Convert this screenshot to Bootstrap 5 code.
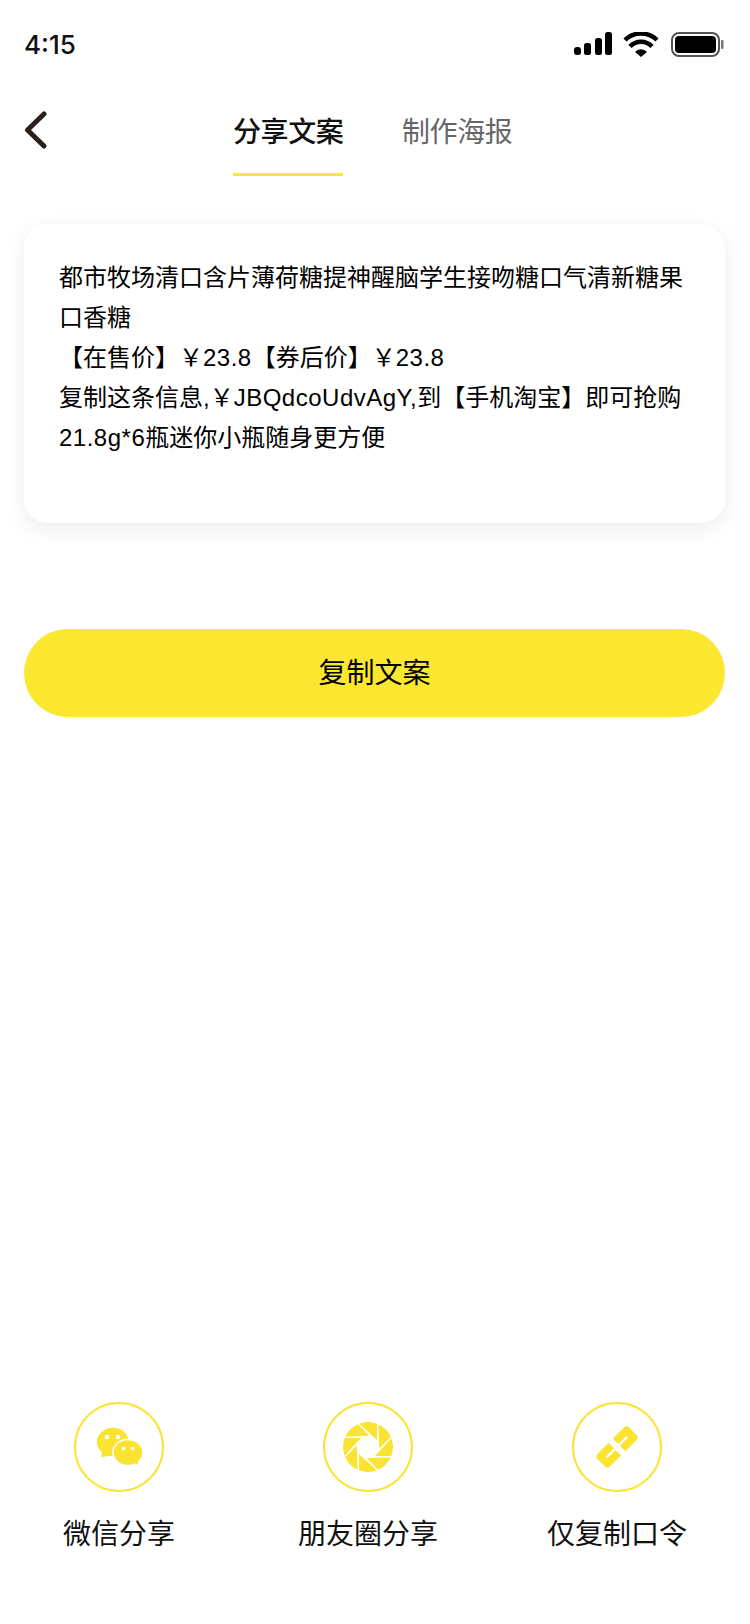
<!DOCTYPE html>
<html lang="zh-CN">

<head>
    <meta charset="utf-8">
    <title>分享文案</title>
    <link rel="stylesheet" href="https://cdn.jsdelivr.net/npm/bootstrap@5.3.0/dist/css/bootstrap.min.css">
    <style>
        body {
            background-color: #fff;
            color: #000;
            font-family: "Liberation Sans", "Noto Sans CJK SC", sans-serif;
        }

        .page-wrap {
            height: 1624px;
        }

        .status-bar {
            height: 88px;
            padding: 28px 26px 0 24px;
        }

        .status-icons {
            margin-top: 4px;
        }

        .status-time {
            font-family: Inter, sans-serif;
            font-size: 26px;
            font-weight: 500;
            line-height: 34px;
            color: #111;
        }

        .top-nav {
            padding: 23px 24px 0;
        }

        .tab-list {
            margin-left: 186px;
            gap: 59px;
        }

        .tab-item {
            font-size: 28px;
            line-height: 40px;
            padding-top: 2px;
            padding-bottom: 20px;
            color: #666;
            border-bottom: 3px solid transparent;
            width: 110px;
            white-space: nowrap;
            letter-spacing: -0.4px;
        }

        .tab-item.active-tab {
            color: #111;
            font-weight: 500;
            border-bottom-color: #fbe72f;
        }

        .copy-card {
            margin: 48px 25px 0 24px;
            height: 299px;
            border: none;
            border-radius: 24px;
            box-shadow: 0 6px 22px rgba(0, 0, 0, 0.08);
            padding: 34px 34px 0 35px;
            font-size: 24px;
            line-height: 40.1px;
        }

        .latin-run {
            letter-spacing: 0.5px;
        }

        .copy-btn {
            display: block;
            margin: 106px 25px 0 24px;
            height: 88px;
            width: 701px;
            border: none;
            border-radius: 44px;
            background-color: #fbe72f;
            color: #000;
            font-size: 28px;
            line-height: 82px;
            padding: 4px 0 2px;
        }

        .share-row {
            padding-right: 14px;
            padding-bottom: 69px;
        }

        .share-item {
            width: 238px;
            gap: 23px;
        }

        .share-label {
            font-size: 28px;
            line-height: 40px;
            color: #111;
        }
    </style>
</head>

<body>

    <div class="page-wrap d-flex flex-column">

        <!-- Status bar -->
        <div class="status-bar d-flex justify-content-between align-items-start">
            <span class="status-time">4:15</span>
            <svg class="status-icons" width="150" height="26" viewBox="0 0 150 26" fill="#000">
                <rect x="0" y="15" width="7" height="8" rx="3"/>
                <rect x="10" y="11" width="7" height="12" rx="2.5"/>
                <rect x="21" y="6" width="7" height="17" rx="2.5"/>
                <rect x="31" y="0" width="7" height="23" rx="2.5"/>
                <path d="M51 8 A23 23 0 0 1 83 8" fill="none" stroke="#000" stroke-width="4.5"/>
                <path d="M56 14.5 A15 15 0 0 1 78 14.5" fill="none" stroke="#000" stroke-width="4.5"/>
                <path d="M61 20 L67 25 L73 20 A8 8 0 0 0 61 20 Z"/>
                <rect x="98" y="1" width="47" height="23" rx="7" fill="none" stroke="#555" stroke-width="2"/>
                <rect x="101" y="4" width="41" height="17" rx="4"/>
                <rect x="147" y="8" width="2.5" height="9" rx="1" fill="#777"/>
            </svg>
        </div>

        <!-- Tabs -->
        <div class="top-nav d-flex align-items-start">
            <svg width="23" height="38" viewBox="0 0 23 38">
                <path d="M20 3 L3.500 19 L20 35" fill="none" stroke="#2a1f1c" stroke-width="5" stroke-linecap="round" stroke-linejoin="round"/>
            </svg>
            <div class="tab-list d-flex">
                <div class="tab-item active-tab">分享文案</div>
                <div class="tab-item">制作海报</div>
            </div>
        </div>

        <!-- Copy text -->
        <div class="card copy-card">
            <div>都市牧场清口含片薄荷糖提神醒脑学生接吻糖口气清新糖果口香糖<br>【在售价】￥<span class="latin-run">23.8</span>【券后价】￥<span class="latin-run">23.8</span><br>复制这条信息,￥<span class="latin-run">JBQdcoUdvAgY,</span>到【手机淘宝】即可抢购<br><span class="latin-run">21.8g*6</span>瓶迷你小瓶随身更方便</div>
        </div>

        <button type="button" class="btn copy-btn">复制文案</button>

        <!-- Share options -->
        <div class="share-row d-flex justify-content-between mt-auto">
            <div class="share-item d-flex flex-column align-items-center">
                <svg width="90" height="90" viewBox="0 0 90 90">
                    <circle cx="45" cy="45" r="44" fill="none" stroke="#fbe331" stroke-width="2"/>
                    <path d="M27 55 L28 50 A16 14 0 1 1 38 53.700 Z" fill="#fbe331"/>
                    <ellipse cx="54" cy="50.500" rx="15" ry="13" fill="#fbe331" stroke="#fff" stroke-width="1.500"/>
                    <path d="M59 60 L64 63 L64 56 Z" fill="#fbe331"/>
                    <circle cx="33" cy="35" r="2.300" fill="#fff"/>
                    <circle cx="44" cy="35" r="2.300" fill="#fff"/>
                    <circle cx="49.500" cy="46.500" r="1.800" fill="#fff"/>
                    <circle cx="58.500" cy="46.500" r="1.800" fill="#fff"/>
                </svg>
                <span class="share-label">微信分享</span>
            </div>
            <div class="share-item d-flex flex-column align-items-center">
                <svg width="90" height="90" viewBox="0 0 90 90">
                    <defs>
                        <clipPath id="lensClip"><circle cx="0" cy="0" r="25"/></clipPath>
                        <polygon id="lensBlade" points="-9.500,-24 -9.500,-27 9,-27 9,-7" fill="#fbe331"/>
                    </defs>
                    <circle cx="45" cy="45" r="44" fill="none" stroke="#fbe331" stroke-width="2"/>
                    <g transform="translate(45 45)" clip-path="url(#lensClip)">
                        <use href="#lensBlade"/>
                        <use href="#lensBlade" transform="rotate(45)"/>
                        <use href="#lensBlade" transform="rotate(90)"/>
                        <use href="#lensBlade" transform="rotate(135)"/>
                        <use href="#lensBlade" transform="rotate(180)"/>
                        <use href="#lensBlade" transform="rotate(225)"/>
                        <use href="#lensBlade" transform="rotate(270)"/>
                        <use href="#lensBlade" transform="rotate(315)"/>
                    </g>
                </svg>
                <span class="share-label">朋友圈分享</span>
            </div>
            <div class="share-item d-flex flex-column align-items-center">
                <svg width="90" height="90" viewBox="0 0 90 90">
                    <circle cx="45" cy="45" r="44" fill="none" stroke="#fbe331" stroke-width="2"/>
                    <g transform="translate(45 45) rotate(-45)" fill="none" stroke="#fbe331" stroke-width="7.800" stroke-linejoin="round">
                        <path d="M3 -5 H18.500 V5 H3"/>
                        <path d="M-3 -5 H-18.500 V5 H-3"/>
                    </g>
                </svg>
                <span class="share-label">仅复制口令</span>
            </div>
        </div>

    </div>

    <script src="https://cdn.jsdelivr.net/npm/bootstrap@5.3.0/dist/js/bootstrap.bundle.min.js"></script>
</body>

</html>
